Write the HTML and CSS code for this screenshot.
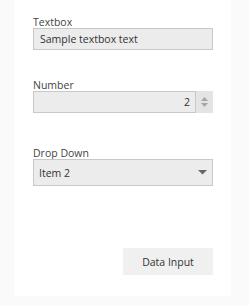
FILE: index.html
```html
<!DOCTYPE html>
<html lang="en">
<head>
  <meta charset="UTF-8">
  <meta name="viewport" content="width=device-width, initial-scale=1.0">
  <title>Data Input</title>
  <link rel="stylesheet" href="styles.css">
</head>
<body>
  <div class="panel">
    <div class="field">
      <label class="label">Textbox</label>
      <div class="box text">Sample textbox text</div>
    </div>

    <div class="field num-field">
      <label class="label">Number</label>
      <div class="box number">
        <div class="num-value">2</div>
        <div class="spinner">
          <svg width="9" height="12" viewBox="0 0 9 12">
            <path d="M1 5 L4.5 1 L8 5 Z" fill="#a6a6a6"/>
            <path d="M1 7 L4.5 11 L8 7 Z" fill="#a6a6a6"/>
          </svg>
        </div>
      </div>
    </div>

    <div class="field drop-field">
      <label class="label">Drop Down</label>
      <div class="box drop">
        <span>Item 2</span>
        <svg class="caret" width="9" height="5" viewBox="0 0 9 5">
          <path d="M0 0 L9 0 L4.5 4.5 Z" fill="#666"/>
        </svg>
      </div>
    </div>

    <div class="actions">
      <button class="btn">Data Input</button>
    </div>
  </div>
</body>
</html>
```

FILE: styles.css
```css
body {
  margin: 0;
  background: #fafafa;
  font-family: "Open Sans", "Noto Sans", sans-serif;
  font-size: 10.5px;
}
.panel {
  margin-left: 14px;
  width: 217px;
  height: 296px;
  background: #fff;
  box-sizing: border-box;
  padding: 12px 0 0 19px;
  display: flex;
  flex-direction: column;
}
.field {
  width: 180px;
  display: flex;
  flex-direction: column;
}
.label {
  height: 16px;
  line-height: 20px;
  color: #444;
}
.box {
  box-sizing: border-box;
  width: 180px;
  background: #ececec;
  border: 1px solid #c8c8c8;
  color: #333;
}
.text {
  height: 22px;
  line-height: 20px;
  padding-left: 6px;
}
.num-field {
  margin-top: 25px;
}
.number {
  height: 22px;
  display: flex;
}
.num-value {
  flex: 1;
  text-align: right;
  line-height: 20px;
  padding-right: 5px;
  border-right: 1px solid #c8c8c8;
}
.spinner {
  width: 17px;
  margin: -1px -1px -1px 0;
  background: #e4e4e4;
  display: flex;
  align-items: center;
  justify-content: center;
}
.drop-field {
  margin-top: 30px;
}
.drop {
  height: 27px;
  display: flex;
  align-items: center;
  justify-content: space-between;
  padding: 0 5px 0 5px;
}
.actions {
  width: 180px;
  margin-top: 62px;
  display: flex;
  justify-content: flex-end;
}
.btn {
  width: 90px;
  height: 27px;
  border: none;
  background: #f0f0f0;
  color: #333;
  font-family: inherit;
  font-size: 10.5px;
  padding: 0;
}
```
